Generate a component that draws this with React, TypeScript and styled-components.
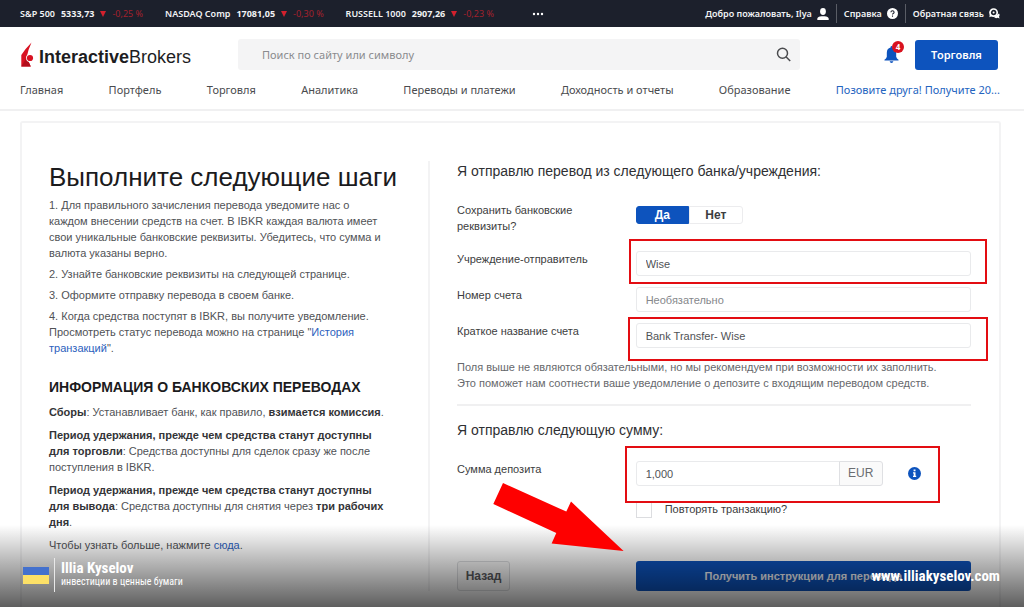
import React from "react";
import styled, { createGlobalStyle } from "styled-components";

const sans = '"Liberation Sans", Arial, sans-serif';
const brand = '"Noto Sans", "Open Sans", sans-serif';
const narrow = '"Liberation Sans Narrow", "Roboto Condensed", "DejaVu Sans Condensed", sans-serif';

const Global = createGlobalStyle`
  *, *::before, *::after { box-sizing: border-box; }
  body { margin: 0; background: #fff; font-family: ${sans}; font-size: 11px; line-height: 16px; color: #505256; }
  h1, h2, h3, p, ul { margin: 0; padding: 0; }
  button, input { font-family: inherit; font-size: inherit; margin: 0; }
  strong { font-weight: 700; }
  a { color: #2c61bd; text-decoration: none; }
`;

const Page = styled.div`
  position: relative;
  display: flex;
  flex-direction: column;
  min-height: 100vh;
  overflow: hidden;
`;

const TopBar = styled.div`
  display: flex;
  justify-content: space-between;
  align-items: center;
  height: 27px;
  padding: 0 24px 0 20px;
  background: #1c202c;
  color: #f1f2f4;
  font-family: ${brand};
  font-size: 9px;
  font-weight: 600;
`;

const Tickers = styled.div`
  display: flex;
  align-items: center;
  gap: 22px;
`;

const Ticker = styled.span`
  display: flex;
  align-items: center;
  gap: 6px;
  white-space: nowrap;
`;

const Change = styled.span`
  color: #a3202d;
  font-weight: 400;
`;

const More = styled.button`
  border: 0;
  padding: 0 0 0 16px;
  background: none;
  color: #fff;
  display: flex;
`;

const UserLinks = styled.div`
  display: flex;
  align-items: center;
`;

const UserLink = styled.a`
  display: flex;
  align-items: center;
  gap: 5px;
  height: 19px;
  padding: 0 7px;
  color: #f1f2f4;
  white-space: nowrap;
  & + & { border-left: 1px solid #5a5d66; }
  &:last-child { padding-right: 0; }
`;

const Header = styled.header`
  padding: 12px 24px 0 20px;
  border-bottom: 2px solid #f0f0f1;
  font-family: ${brand};
`;

const HeaderRow = styled.div`
  display: grid;
  grid-template-columns: 218px 1fr 200px;
  align-items: center;
  height: 31px;
`;

const Logo = styled.a`
  display: flex;
  align-items: flex-end;
  gap: 5px;
  color: #1d1d1f;
  font: 18px/20px ${sans};
`;

const Search = styled.label`
  display: flex;
  align-items: center;
  height: 31px;
  padding: 0 9px 0 24px;
  background: #f4f4f5;
  border-radius: 3px;
  input {
    flex: 1;
    min-width: 0;
    border: 0;
    padding: 0;
    background: none;
    font-size: 11px;
    color: #55575b;
  }
  input::placeholder { color: #8a8b8e; opacity: 1; }
`;

const HeaderActions = styled.div`
  display: flex;
  align-items: center;
  justify-content: flex-end;
  gap: 16px;
  padding-right: 2px;
`;

const Bell = styled.button`
  position: relative;
  display: flex;
  border: 0;
  padding: 0;
  background: none;
`;

const Badge = styled.span`
  position: absolute;
  top: -5px;
  right: -5px;
  width: 12px;
  height: 12px;
  border-radius: 50%;
  background: #d8121f;
  color: #fff;
  font-size: 8px;
  font-weight: 700;
  line-height: 12px;
  text-align: center;
`;

const TradeButton = styled.button`
  width: 83px;
  height: 30px;
  border: 0;
  border-radius: 3px;
  background: #0d53bd;
  color: #fff;
  font-size: 11px;
  font-weight: 600;
`;

const Nav = styled.nav`
  display: flex;
  justify-content: space-between;
  padding: 12px 0 11px;
  font-size: 11px;
  white-space: nowrap;
`;

const NavLink = styled.a<{ $accent?: boolean }>`
  color: ${(p) => (p.$accent ? "#2464bf" : "#4a4b4e")};
`;

const Card = styled.main`
  flex: 1;
  display: grid;
  grid-template-columns: 381fr 541fr;
  margin: 10px 23px 0 20px;
  padding: 38px 28px 16px 27px;
  border: 2px solid #f3f3f4;
  border-bottom: 0;
  border-radius: 3px 3px 0 0;
`;

const Steps = styled.section`
  padding-right: 27px;
  border-right: 2px solid #f3f3f4;
`;

const StepsTitle = styled.h1`
  font-size: 26px;
  font-weight: 400;
  line-height: 32px;
  color: #1b1b1d;
  white-space: nowrap;
  margin-bottom: 4px;
`;

const Paragraphs = styled.div<{ $gap: number }>`
  display: flex;
  flex-direction: column;
  gap: ${(p) => p.$gap}px;
  max-width: 339px;
  strong { color: #333437; }
`;

const InfoTitle = styled.h2`
  margin: 21px 0 7px;
  font-size: 14px;
  line-height: 20px;
  color: #1b1b1d;
  white-space: nowrap;
`;

const Form = styled.form`
  padding-left: 27px;
  color: #3c3d40;
`;

const SectionTitle = styled.h3`
  font-size: 14px;
  font-weight: 400;
  line-height: 20px;
  color: #2f3033;
`;

const Rows = styled.div`
  display: flex;
  flex-direction: column;
  gap: 11px;
`;

const Row = styled.div`
  display: grid;
  grid-template-columns: 179fr 336fr;
  align-items: start;
`;

const SaveRow = styled(Row)`
  margin: 21px 0 17px;
`;

const AmountRow = styled(Row)`
  margin: 21px 0 16px;
`;

const LabelText = styled.label`
  padding-right: 36px;
`;

const Control = styled.div`
  position: relative;
  display: flex;
  align-items: center;
`;

const TextInput = styled.input`
  flex: 1;
  min-width: 0;
  height: 25px;
  padding: 0 9px;
  border: 1px solid #e9eaec;
  border-radius: 3px;
  background: #fff;
  color: #505256;
  &::placeholder { color: #85878b; opacity: 1; }
`;

const AmountInput = styled(TextInput)`
  flex: 0 1 204px;
  border-radius: 3px 0 0 3px;
`;

const Currency = styled.span`
  width: 44px;
  height: 25px;
  border: 1px solid #dfe0e3;
  border-radius: 0 3px 3px 0;
  margin-left: -1px;
  background: #fafafa;
  font-size: 12px;
  line-height: 23px;
  text-align: center;
  color: #6b6d71;
`;

const InfoButton = styled.button`
  display: flex;
  margin-left: 25px;
  border: 0;
  padding: 0;
  background: none;
`;

const Highlight = styled.span<{ $inset: string }>`
  position: absolute;
  inset: ${(p) => p.$inset};
  border: 2px solid #e30d12;
  pointer-events: none;
`;

const Toggle = styled.div`
  display: flex;
  width: 107px;
  margin-top: 4px;
`;

const ToggleOption = styled.button<{ $on?: boolean }>`
  flex: 1;
  height: 18px;
  padding: 0;
  border: 1px solid ${(p) => (p.$on ? "#0d53bd" : "#ececee")};
  border-radius: ${(p) => (p.$on ? "3px 0 0 3px" : "0 3px 3px 0")};
  background: ${(p) => (p.$on ? "#0d53bd" : "#fff")};
  color: ${(p) => (p.$on ? "#fff" : "#3c3d40")};
  font-size: 12px;
  line-height: 16px;
  font-weight: 700;
`;

const Note = styled.p`
  margin: 11px 0 13px;
  padding-right: 20px;
  color: #66686c;
`;

const Divider = styled.hr`
  margin: 0 0 14px;
  border: 0;
  border-top: 2px solid #f0f0f1;
`;

const Repeat = styled.label`
  grid-column: 2;
  display: flex;
  gap: 13px;
  height: 16px;
  line-height: 14px;
  input {
    appearance: none;
    width: 16px;
    height: 16px;
    border: 1px solid #dcdde0;
    background: #fff;
  }
`;

const Actions = styled(Row)`
  position: relative;
  margin-top: 43px;
`;

const BackButton = styled.button`
  width: 53px;
  height: 30px;
  padding: 0;
  border: 1px solid #dcdde0;
  border-radius: 3px;
  background: #fafafa;
  color: #5a5b5f;
  font-size: 12px;
  font-weight: 700;
`;

const SubmitButton = styled.button`
  height: 30px;
  border: 0;
  border-radius: 3px;
  background: #0d53bd;
  color: #f2f5fb;
  font-weight: 700;
`;

const Arrow = styled.svg`
  position: absolute;
  z-index: 2;
  left: 36px;
  top: -79px;
`;

const Caption = styled.footer`
  position: absolute;
  z-index: 1;
  left: 0;
  right: 0;
  bottom: 0;
  display: flex;
  align-items: flex-end;
  justify-content: space-between;
  height: 82px;
  padding: 0 24px 15px 23px;
  background: linear-gradient(rgba(0, 0, 0, 0), rgba(0, 0, 0, 0.63));
  color: #fff;
  font-family: ${narrow};
  pointer-events: none;
`;

const Author = styled.div`
  display: flex;
  align-items: center;
`;

const Flag = styled.span`
  width: 26px;
  height: 17px;
  background: linear-gradient(#4471cd 50%, #fce067 50%);
`;

const AuthorText = styled.div`
  height: 34px;
  margin-left: 5px;
  padding: 2px 0 0 6px;
  border-left: 1px solid #e8e8e8;
  font-size: 10px;
  line-height: 12px;
  white-space: nowrap;
  strong {
    display: block;
    font-size: 15px;
    line-height: 16px;
  }
`;

const Site = styled.span`
  font-size: 15px;
  font-weight: 700;
  line-height: 32px;
`;

const tickers = [
  ["S&P 500", "5333,73", "-0,25 %"],
  ["NASDAQ Comp", "17081,05", "-0,30 %"],
  ["RUSSELL 1000", "2907,26", "-0,23 %"],
];

const navItems = [
  "Главная",
  "Портфель",
  "Торговля",
  "Аналитика",
  "Переводы и платежи",
  "Доходность и отчеты",
  "Образование",
];

export default function App() {
  return (
    <Page>
      <Global />
      <TopBar>
        <Tickers>
          {tickers.map(([name, value, change]) => (
            <Ticker key={name}>
              <span>{name}</span>
              <strong>{value}</strong>
              <svg width="6" height="6" viewBox="0 0 6 6"><path d="M0 0h6L3 6z" fill="#d3202d" /></svg>
              <Change>{change}</Change>
            </Ticker>
          ))}
          <More type="button" aria-label="Ещё">
            <svg width="12" height="4" viewBox="0 0 12 4" fill="#fff">
              <circle cx="2" cy="2" r="1.2" /><circle cx="6" cy="2" r="1.2" /><circle cx="10" cy="2" r="1.2" />
            </svg>
          </More>
        </Tickers>
        <UserLinks>
          <UserLink href="#account">
            Добро пожаловать, Ilya
            <svg width="12" height="12" viewBox="0 0 12 12" fill="#fff">
              <ellipse cx="6" cy="3.5" rx="2.9" ry="3.4" />
              <path d="M.3 12V10.800Q.6 8.500 4.500 8.200h3Q11.400 8.500 11.700 10.800V12z" />
            </svg>
          </UserLink>
          <UserLink href="#help">
            Справка
            <svg width="11" height="11" viewBox="0 0 11 11">
              <circle cx="5.500" cy="5.500" r="5.500" fill="#fff" />
              <path d="M3.900 4.300Q4 2.800 5.500 2.800T7.100 4.200Q7.100 5 6.200 5.500 5.500 5.900 5.500 6.600M5.500 7.600v1.200" fill="none" stroke="#1c202c" strokeWidth="1.100" />
            </svg>
          </UserLink>
          <UserLink href="#feedback">
            Обратная связь
            <svg width="11" height="11" viewBox="0 0 11 11">
              <path d="M5 9a3 3 0 0 0 3.600.8L10.600 10.600 10 8.800A3 3 0 0 0 10 5.400" fill="#fff" />
              <circle cx="4.600" cy="4.600" r="3.600" fill="#1c202c" stroke="#fff" strokeWidth="1.700" />
              <path d="M.8 6L.4 9.200 3.200 8z" fill="#fff" />
              <circle cx="4.600" cy="4.600" r="1" fill="#fff" />
            </svg>
          </UserLink>
        </UserLinks>
      </TopBar>

      <Header>
        <HeaderRow>
          <Logo href="#home">
            <svg width="14" height="25" viewBox="0 0 14 25">
              <path d="M11.500.500Q5.500 6.500 1.300 13V24.600H10.800L6.600 15.500Q8 8 11.500.500z" fill="#d81222" />
              <path d="M1.300 24.600L6.600 15.500 10.800 24.600z" fill="#b30d1b" />
              <circle cx="10" cy="16" r="3.900" fill="#fff" />
              <circle cx="10" cy="16" r="3.100" fill="#d81222" />
            </svg>
            <span><b>Interactive</b>Brokers</span>
          </Logo>
          <Search>
            <input type="search" aria-label="Поиск" placeholder="Поиск по сайту или символу" />
            <svg width="15" height="15" viewBox="0 0 15 15" fill="none" stroke="#4a4b4e" strokeWidth="1.500">
              <circle cx="6.500" cy="6.300" r="5" /><path d="M10.200 10l4 4" />
            </svg>
          </Search>
          <HeaderActions>
            <Bell type="button" aria-label="Уведомления">
              <svg width="15" height="17" viewBox="0 0 16 18" fill="#0d53bd">
                <path d="M8 0q1 0 1 1.500Q13 2.700 13 7v4.500Q13.500 13.500 15.500 14.500V15.500H.5V14.500Q2.500 13.500 3 11.500V7Q3 2.700 7 1.500 7 0 8 0z" />
                <path d="M6 16.200h4Q9.600 18 8 18T6 16.200z" />
              </svg>
              <Badge>4</Badge>
            </Bell>
            <TradeButton type="button">Торговля</TradeButton>
          </HeaderActions>
        </HeaderRow>
        <Nav>
          {navItems.map((item) => (
            <NavLink key={item} href="#nav">{item}</NavLink>
          ))}
          <NavLink href="#invite" $accent>Позовите друга! Получите 20...</NavLink>
        </Nav>
      </Header>

      <Card>
        <Steps>
          <StepsTitle>Выполните следующие шаги</StepsTitle>
          <Paragraphs $gap={5}>
            <p>
              1. Для правильного зачисления перевода уведомите нас о каждом внесении средств на счет. В IBKR каждая
              валюта имеет свои уникальные банковские реквизиты. Убедитесь, что сумма и валюта указаны верно.
            </p>
            <p>2. Узнайте банковские реквизиты на следующей странице.</p>
            <p>3. Оформите отправку перевода в своем банке.</p>
            <p>
              4. Когда средства поступят в IBKR, вы получите уведомление. Просмотреть статус перевода можно на
              странице "<a href="#history">История транзакций</a>".
            </p>
          </Paragraphs>
          <InfoTitle>ИНФОРМАЦИЯ О БАНКОВСКИХ ПЕРЕВОДАХ</InfoTitle>
          <Paragraphs $gap={7}>
            <p><strong>Сборы</strong>: Устанавливает банк, как правило, <strong>взимается комиссия</strong>.</p>
            <p>
              <strong>Период удержания, прежде чем средства станут доступны для торговли</strong>: Средства
              доступны для сделок сразу же после поступления в IBKR.
            </p>
            <p>
              <strong>Период удержания, прежде чем средства станут доступны для вывода</strong>: Средства
              доступны для снятия через <strong>три рабочих дня</strong>.
            </p>
            <p>Чтобы узнать больше, нажмите <a href="#more">сюда</a>.</p>
          </Paragraphs>
        </Steps>

        <Form onSubmit={(e) => e.preventDefault()}>
          <SectionTitle>Я отправлю перевод из следующего банка/учреждения:</SectionTitle>
          <SaveRow>
            <LabelText as="span" id="save">Сохранить банковские реквизиты?</LabelText>
            <Toggle role="group" aria-labelledby="save">
              <ToggleOption type="button" aria-pressed="true" $on>Да</ToggleOption>
              <ToggleOption type="button" aria-pressed="false">Нет</ToggleOption>
            </Toggle>
          </SaveRow>
          <Rows>
            <Row>
              <LabelText htmlFor="bank">Учреждение-отправитель</LabelText>
              <Control>
                <TextInput id="bank" defaultValue="Wise" />
                <Highlight $inset="-12px -16px -8px -7px" />
              </Control>
            </Row>
            <Row>
              <LabelText htmlFor="number">Номер счета</LabelText>
              <Control>
                <TextInput id="number" placeholder="Необязательно" />
              </Control>
            </Row>
            <Row>
              <LabelText htmlFor="nick">Краткое название счета</LabelText>
              <Control>
                <TextInput id="nick" defaultValue="Bank Transfer- Wise" />
                <Highlight $inset="-6px -17px -13px -8px" />
              </Control>
            </Row>
          </Rows>
          <Note>
            Поля выше не являются обязательными, но мы рекомендуем при возможности их заполнить. Это поможет нам
            соотнести ваше уведомление о депозите с входящим переводом средств.
          </Note>
          <Divider />
          <SectionTitle>Я отправлю следующую сумму:</SectionTitle>
          <AmountRow>
            <LabelText htmlFor="amount">Сумма депозита</LabelText>
            <Control>
              <AmountInput id="amount" defaultValue="1,000" />
              <Currency>EUR</Currency>
              <InfoButton type="button" aria-label="Подробнее">
                <svg width="13" height="13" viewBox="0 0 13 13">
                  <circle cx="6.500" cy="6.500" r="6.500" fill="#0d53bd" />
                  <path d="M5.600 2.500h1.900v1.700H5.600zM5 5.200h2.500v3.600h.700v1.200H5V8.800h.700V6.400H5z" fill="#fff" />
                </svg>
              </InfoButton>
              <Highlight $inset="-15px 31px -17px -11px" />
            </Control>
          </AmountRow>
          <Row>
            <Repeat>
              <input type="checkbox" />
              Повторять транзакцию?
            </Repeat>
          </Row>
          <Actions>
            <div><BackButton type="button">Назад</BackButton></div>
            <SubmitButton type="submit">Получить инструкции для перевода</SubmitButton>
            <Arrow width="131" height="69" viewBox="0 0 131 69" aria-hidden="true">
              <path d="M10 1L73.300 29.600 78 19.600 130.600 69 58.600 61.500 63.300 51 .3 22z" fill="#fe0000" />
            </Arrow>
          </Actions>
        </Form>
      </Card>

      <Caption>
        <Author>
          <Flag />
          <AuthorText>
            <strong>Illia Kyselov</strong>
            инвестиции в ценные бумаги
          </AuthorText>
        </Author>
        <Site>www.illiakyselov.com</Site>
      </Caption>
    </Page>
  );
}
